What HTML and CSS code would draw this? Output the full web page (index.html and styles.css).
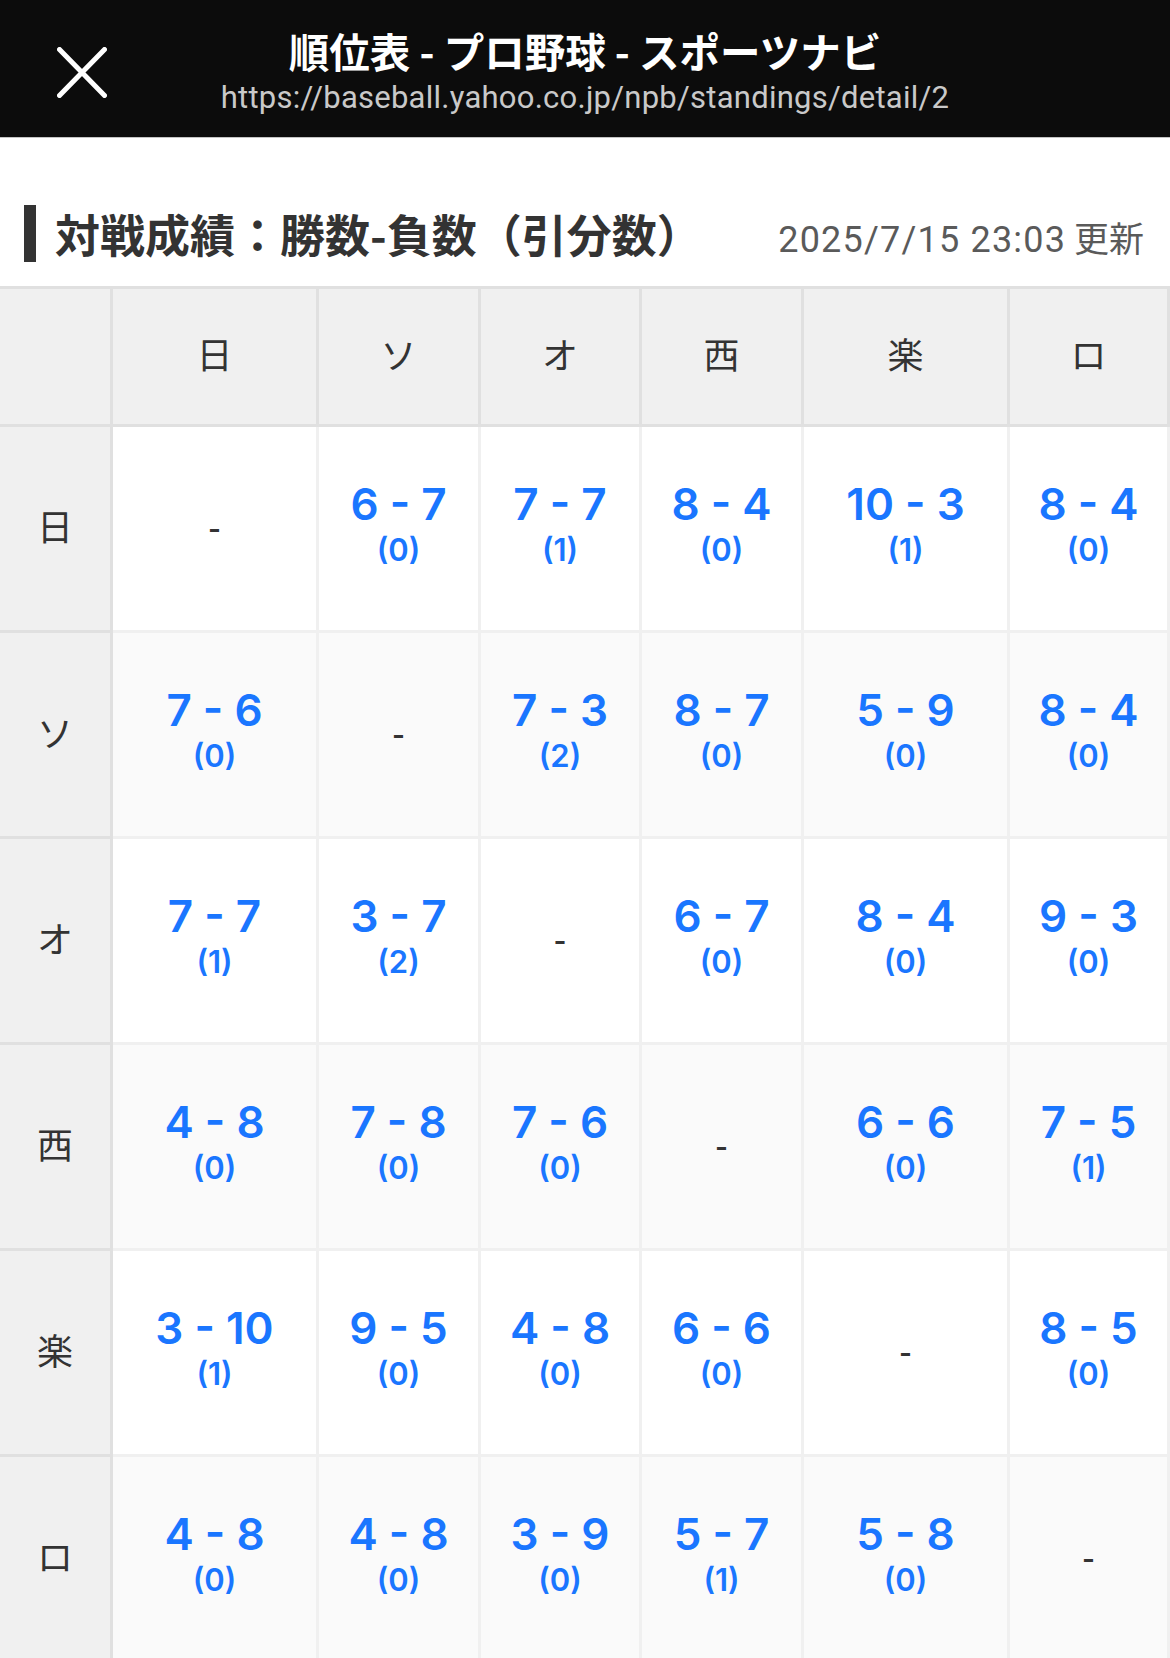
FILE: index.html
```html
<!DOCTYPE html>
<html lang="ja">
<head>
<meta charset="utf-8">
<title>順位表 - プロ野球 - スポーツナビ</title>
<link rel="stylesheet" href="styles.css">
</head>
<body>
<header class="topbar">
  <button class="close" aria-label="閉じる">
    <svg width="50" height="51" viewBox="0 0 50 51" aria-hidden="true">
      <path d="M2.5 2.5 L47.5 48.5 M47.5 2.5 L2.5 48.5" stroke="#fff" stroke-width="5" stroke-linecap="round" fill="none"/>
    </svg>
  </button>
  <div class="titles">
    <div class="page-title">順位表 - プロ野球 - スポーツナビ</div>
    <div class="page-url">https://baseball.yahoo.co.jp/npb/standings/detail/2</div>
  </div>
  <div class="spacer"></div>
</header>
<main>
  <div class="section-head">
    <h2 class="section-title">対戦成績：勝数-負数（引分数）</h2>
    <span class="updated"><span class="stamp">2025/7/15 23:03</span> 更新</span>
  </div>
  <table class="matrix">
    <colgroup>
      <col class="col-team">
      <col class="col-wide">
      <col class="col-a">
      <col class="col-b">
      <col class="col-a">
      <col class="col-wide">
      <col class="col-d">
    </colgroup>
    <thead>
      <tr>
        <th class="corner"></th>
        <th>日</th><th>ソ</th><th>オ</th><th>西</th><th>楽</th><th>ロ</th>
      </tr>
    </thead>
    <tbody>
      <tr>
        <th class="team">日</th>
        <td class="diag"><span class="self">-</span></td>
        <td><span class="score">6 - 7</span><span class="ties">(0)</span></td>
        <td><span class="score">7 - 7</span><span class="ties">(1)</span></td>
        <td><span class="score">8 - 4</span><span class="ties">(0)</span></td>
        <td><span class="score">10 - 3</span><span class="ties">(1)</span></td>
        <td><span class="score">8 - 4</span><span class="ties">(0)</span></td>
      </tr>
      <tr>
        <th class="team">ソ</th>
        <td><span class="score">7 - 6</span><span class="ties">(0)</span></td>
        <td class="diag"><span class="self">-</span></td>
        <td><span class="score">7 - 3</span><span class="ties">(2)</span></td>
        <td><span class="score">8 - 7</span><span class="ties">(0)</span></td>
        <td><span class="score">5 - 9</span><span class="ties">(0)</span></td>
        <td><span class="score">8 - 4</span><span class="ties">(0)</span></td>
      </tr>
      <tr>
        <th class="team">オ</th>
        <td><span class="score">7 - 7</span><span class="ties">(1)</span></td>
        <td><span class="score">3 - 7</span><span class="ties">(2)</span></td>
        <td class="diag"><span class="self">-</span></td>
        <td><span class="score">6 - 7</span><span class="ties">(0)</span></td>
        <td><span class="score">8 - 4</span><span class="ties">(0)</span></td>
        <td><span class="score">9 - 3</span><span class="ties">(0)</span></td>
      </tr>
      <tr>
        <th class="team">西</th>
        <td><span class="score">4 - 8</span><span class="ties">(0)</span></td>
        <td><span class="score">7 - 8</span><span class="ties">(0)</span></td>
        <td><span class="score">7 - 6</span><span class="ties">(0)</span></td>
        <td class="diag"><span class="self">-</span></td>
        <td><span class="score">6 - 6</span><span class="ties">(0)</span></td>
        <td><span class="score">7 - 5</span><span class="ties">(1)</span></td>
      </tr>
      <tr>
        <th class="team">楽</th>
        <td><span class="score">3 - 10</span><span class="ties">(1)</span></td>
        <td><span class="score">9 - 5</span><span class="ties">(0)</span></td>
        <td><span class="score">4 - 8</span><span class="ties">(0)</span></td>
        <td><span class="score">6 - 6</span><span class="ties">(0)</span></td>
        <td class="diag"><span class="self">-</span></td>
        <td><span class="score">8 - 5</span><span class="ties">(0)</span></td>
      </tr>
      <tr>
        <th class="team">ロ</th>
        <td><span class="score">4 - 8</span><span class="ties">(0)</span></td>
        <td><span class="score">4 - 8</span><span class="ties">(0)</span></td>
        <td><span class="score">3 - 9</span><span class="ties">(0)</span></td>
        <td><span class="score">5 - 7</span><span class="ties">(1)</span></td>
        <td><span class="score">5 - 8</span><span class="ties">(0)</span></td>
        <td class="diag"><span class="self">-</span></td>
      </tr>
    </tbody>
  </table>
</main>
</body>
</html>
```
FILE: styles.css
```css
* { box-sizing: border-box; }

html, body {
  margin: 0;
  padding: 0;
  background: #fff;
  font-family: "Noto Sans CJK JP", "Noto Sans", sans-serif;
  color: #333;
}

body {
  width: 1170px;
  height: 1658px;
  overflow: hidden;
}

/* ---------- top bar ---------- */
.topbar {
  display: grid;
  grid-template-columns: 1fr auto 1fr;
  height: 138px;
  background: #0c0c0c;
  border-bottom: 1px solid #c4c4c4;
}

.close {
  align-self: start;
  justify-self: start;
  margin: 47px 0 0 57px;
  padding: 0;
  border: 0;
  background: none;
  width: 50px;
  height: 51px;
  display: block;
}

.close svg { display: block; }

.titles {
  padding-top: 27px;
  text-align: center;
}

.page-title {
  font-family: "Noto Sans CJK JP", sans-serif;
  font-weight: 700;
  font-size: 40.5px;
  line-height: 47px;
  color: #fff;
  white-space: nowrap;
}

.page-url {
  margin-top: 4px;
  font-family: "Roboto", "Liberation Sans", sans-serif;
  font-size: 31px;
  line-height: 40px;
  color: #c9c9c9;
  white-space: nowrap;
  letter-spacing: 0.25px;
}

/* ---------- section head ---------- */
.section-head {
  display: flex;
  align-items: center;
  justify-content: space-between;
  height: 148px;
  padding: 67px 26px 24px 24px;
}

.section-title {
  display: flex;
  align-items: center;
  margin: 0;
  height: 57px;
  font-size: 45px;
  font-weight: 700;
  color: #333;
  letter-spacing: 0;
  white-space: nowrap;
}

.section-title::before {
  content: "";
  display: block;
  width: 12px;
  height: 57px;
  background: #333;
  margin-right: 19px;
}

.updated {
  font-size: 35px;
  color: #5a5a5a;
  white-space: nowrap;
  padding-top: 6px;
}

.stamp {
  font-family: "Roboto", "Liberation Sans", sans-serif;
  font-size: 36px;
  letter-spacing: 1.2px;
}

/* ---------- matrix table ---------- */
.matrix {
  width: 1170px;
  table-layout: fixed;
  border-collapse: separate;
  border-spacing: 0;
}

.col-team { width: 113px; }
.col-wide { width: 206px; }
.col-a { width: 162px; }
.col-b { width: 161px; }
.col-d { width: 160px; }

.matrix th,
.matrix td {
  padding: 0;
  text-align: center;
  vertical-align: middle;
}

.matrix thead th {
  height: 141px;
  padding-bottom: 8px;
  background: #f0f0f0;
  border-top: 3px solid #e0e0e0;
  border-right: 3px solid #e0e0e0;
  border-bottom: 3px solid #e0e0e0;
  font-size: 36px;
  font-weight: 400;
  color: #333;
}

.matrix tbody th.team {
  height: 206px;
  padding-bottom: 8px;
  background: #f0f0f0;
  border-right: 3px solid #e0e0e0;
  border-bottom: 3px solid #e0e0e0;
  font-size: 36px;
  font-weight: 400;
  color: #333;
}

.matrix tbody td {
  height: 206px;
  background: #fff;
  border-right: 3px solid #f0f0f0;
  border-bottom: 3px solid #f0f0f0;
  padding-bottom: 9px;
}

.matrix tbody td.diag {
  padding-bottom: 0;
}

.matrix tbody tr:nth-child(even) td {
  background: #fafafa;
}

.score {
  display: block;
  font-family: "Inter", "Roboto", sans-serif;
  font-weight: 600;
  font-size: 44px;
  line-height: 48px;
  color: #1a76ff;
  white-space: nowrap;
}

.ties {
  display: block;
  margin-top: 4px;
  font-family: "Inter", "Roboto", sans-serif;
  font-weight: 600;
  font-size: 31px;
  line-height: 36px;
  color: #1a76ff;
}

.self {
  font-family: "Roboto", sans-serif;
  font-size: 38px;
  color: #333;
}
```
